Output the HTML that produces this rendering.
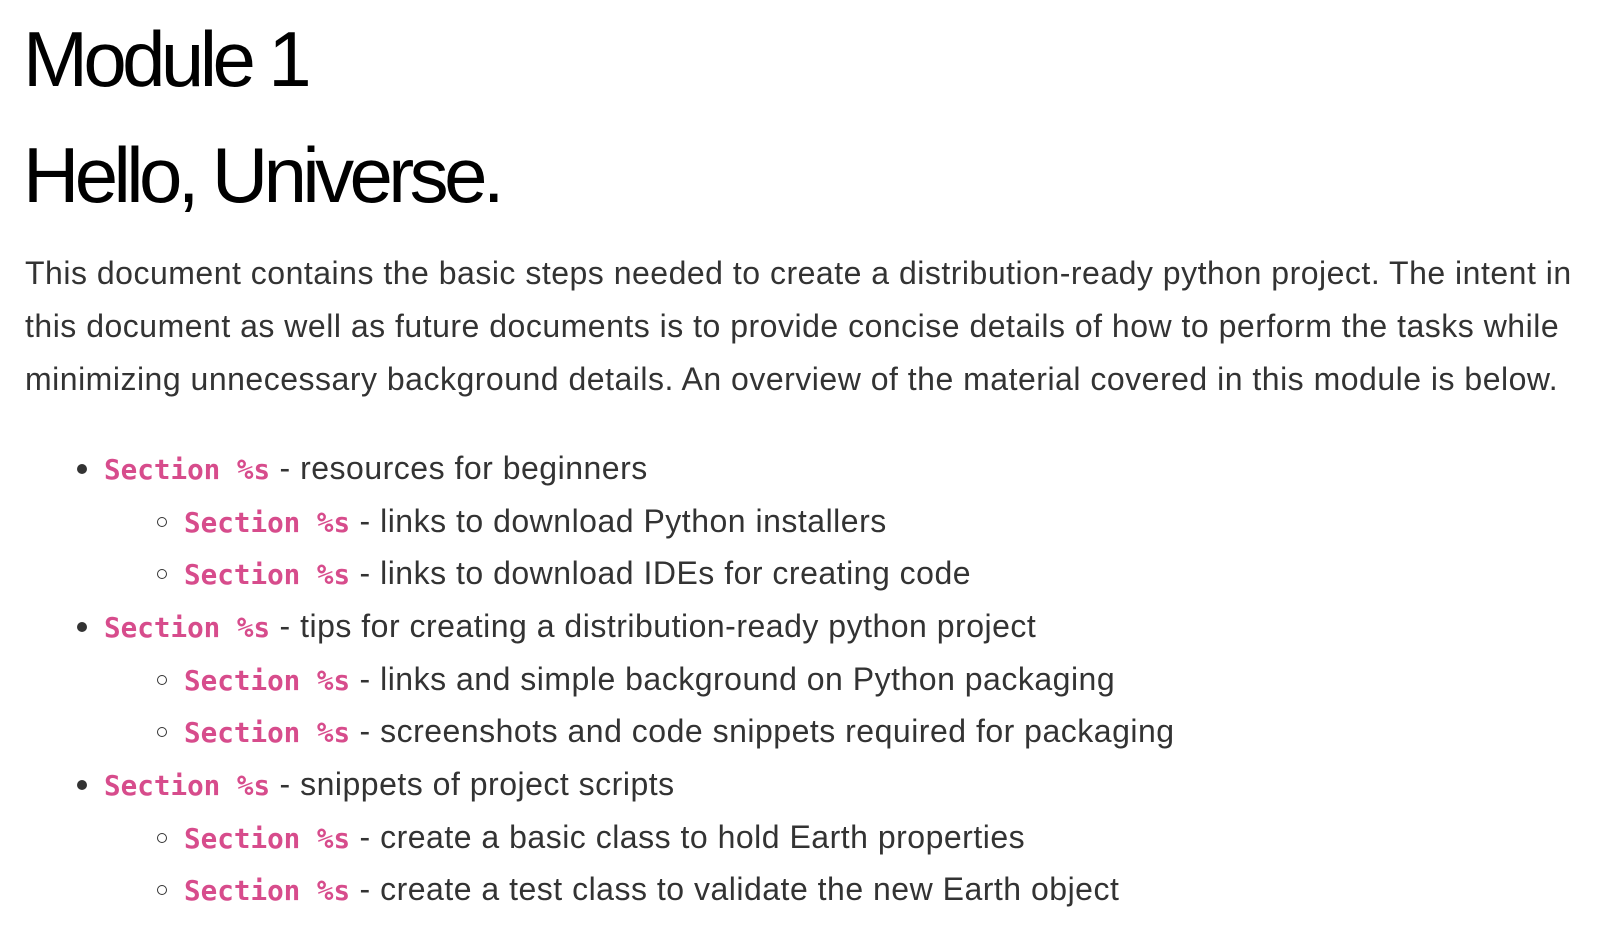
<!DOCTYPE html>
<html><head><meta charset="utf-8"><style>
body{margin:0;background:#fff;width:1618px;height:932px;position:relative;overflow:hidden;font-family:"Liberation Sans",Arial,sans-serif;}
.h{position:absolute;left:23px;font-size:78px;line-height:78px;color:#000;white-space:nowrap;letter-spacing:-4.6px;}
.l{position:absolute;font-size:32px;line-height:53px;color:#333;white-space:nowrap;letter-spacing:0.5px;}
code{font-family:"DejaVu Sans Mono","Liberation Mono",monospace;font-weight:bold;color:#d74c8c;font-size:27.6px;letter-spacing:0;}
.d{position:absolute;width:10px;height:10px;border-radius:50%;background:#333;}
.c{position:absolute;width:10px;height:10px;border-radius:50%;border:1.5px solid #333;box-sizing:border-box;}
</style></head><body>
<div class="h" style="top:20px">Module 1</div>
<div class="h" style="top:136px">Hello, Universe.</div>
<div class="l" style="left:25px;top:247px">This document contains the basic steps needed to create a distribution-ready python project. The intent in</div>
<div class="l" style="left:25px;top:300px">this document as well as future documents is to provide concise details of how to perform the tasks while</div>
<div class="l" style="left:25px;top:353px">minimizing unnecessary background details. An overview of the material covered in this module is below.</div>

<div class="d" style="left:77px;top:464px"></div>
<div class="l" style="left:104px;top:442px"><code>Section %s</code> - resources for beginners</div>
<div class="c" style="left:157px;top:517px"></div>
<div class="l" style="left:184px;top:495px"><code>Section %s</code> - links to download Python installers</div>
<div class="c" style="left:157px;top:569px"></div>
<div class="l" style="left:184px;top:547px"><code>Section %s</code> - links to download IDEs for creating code</div>
<div class="d" style="left:77px;top:622px"></div>
<div class="l" style="left:104px;top:600px"><code>Section %s</code> - tips for creating a distribution-ready python project</div>
<div class="c" style="left:157px;top:675px"></div>
<div class="l" style="left:184px;top:653px"><code>Section %s</code> - links and simple background on Python packaging</div>
<div class="c" style="left:157px;top:727px"></div>
<div class="l" style="left:184px;top:705px"><code>Section %s</code> - screenshots and code snippets required for packaging</div>
<div class="d" style="left:77px;top:780px"></div>
<div class="l" style="left:104px;top:758px"><code>Section %s</code> - snippets of project scripts</div>
<div class="c" style="left:157px;top:833px"></div>
<div class="l" style="left:184px;top:811px"><code>Section %s</code> - create a basic class to hold Earth properties</div>
<div class="c" style="left:157px;top:885px"></div>
<div class="l" style="left:184px;top:863px"><code>Section %s</code> - create a test class to validate the new Earth object</div>
</body></html>
